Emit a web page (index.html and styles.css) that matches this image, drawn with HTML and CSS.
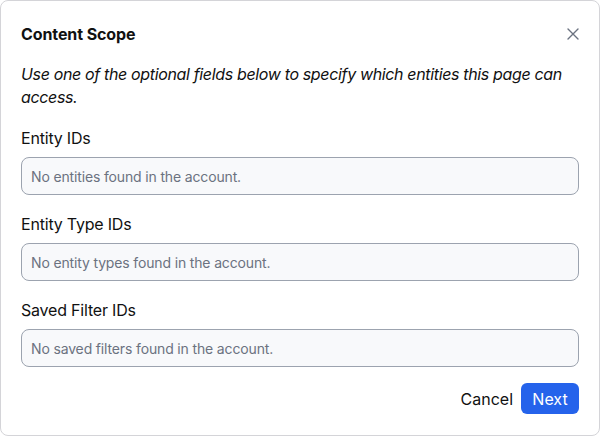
FILE: index.html
```html
<!DOCTYPE html>
<html>
<head>
<meta charset="utf-8">
<link rel="stylesheet" href="styles.css">
</head>
<body>
<div class="dialog">
  <div class="header">
    <h2 class="title">Content Scope</h2>
    <button class="close" aria-label="Close">
      <svg width="12" height="12" viewBox="0 0 12 12"><path d="M1 1L11 11M11 1L1 11" stroke="#6b7280" stroke-width="1.4" stroke-linecap="round"/></svg>
    </button>
  </div>
  <p class="desc">Use one of the optional fields below to specify which entities this page can access.</p>
  <div class="field">
    <label class="label">Entity IDs</label>
    <div class="input">No entities found in the account.</div>
  </div>
  <div class="field">
    <label class="label">Entity Type IDs</label>
    <div class="input">No entity types found in the account.</div>
  </div>
  <div class="field">
    <label class="label">Saved Filter IDs</label>
    <div class="input">No saved filters found in the account.</div>
  </div>
  <div class="footer">
    <button class="btn-cancel">Cancel</button>
    <button class="btn-next">Next</button>
  </div>
</div>
</body>
</html>
```
FILE: styles.css
```css
html, body {
  margin: 0;
  padding: 0;
  background: #ffffff;
}
body {
  font-family: Inter, "Noto Sans", sans-serif;
  color: #111111;
}
.dialog {
  box-sizing: border-box;
  width: 600px;
  height: 436px;
  border: 1px solid #d4d4d8;
  border-radius: 8px;
  padding: 23px 20px 0 20px;
  display: flex;
  flex-direction: column;
}
.header {
  display: flex;
  align-items: center;
  justify-content: space-between;
  height: 20px;
}
.title {
  margin: 0;
  font-size: 16px;
  font-weight: 700;
  line-height: 20px;
  letter-spacing: -0.1px;
}
.close {
  border: 0;
  background: none;
  padding: 0;
  width: 12px;
  height: 12px;
  margin-right: 0;
  display: flex;
}
.desc {
  margin: 19px 0 0 0;
  font-size: 16px;
  font-style: italic;
  line-height: 23px;
  letter-spacing: -0.35px;
}
.field {
  display: flex;
  flex-direction: column;
  margin-top: 17px;
}
.label {
  font-size: 16px;
  line-height: 24px;
  letter-spacing: -0.2px;
}
.input {
  box-sizing: border-box;
  margin-top: 7px;
  height: 38px;
  border: 1px solid #9ca3af;
  border-radius: 8px;
  background: #f8f9fb;
  padding: 0 9px;
  display: flex;
  align-items: center;
  font-size: 14px;
  letter-spacing: -0.15px;
  color: #6b7280;
}
.footer {
  display: flex;
  justify-content: flex-end;
  align-items: center;
  gap: 8px;
  margin-top: 16px;
}
.btn-cancel {
  border: 0;
  background: none;
  padding: 0;
  font-family: inherit;
  font-size: 16px;
  color: #111111;
}
.btn-next {
  border: 0;
  background: #2563eb;
  color: #ffffff;
  font-family: inherit;
  font-size: 16px;
  height: 31px;
  width: 58px;
  border-radius: 6px;
  padding: 0;
}
```
